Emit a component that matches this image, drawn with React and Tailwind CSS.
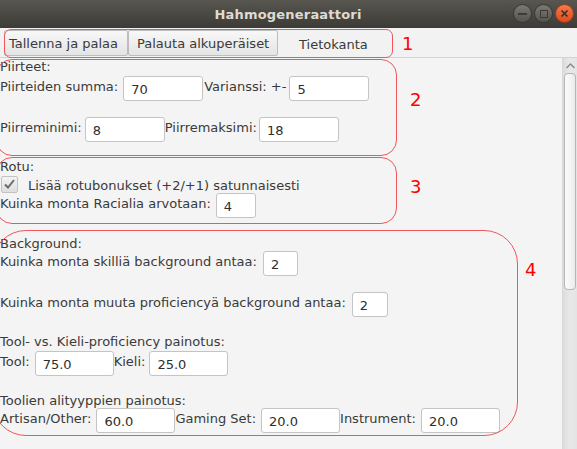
import React from "react";

function Field({ value, w }) {
  return (
    <div
      className={`${w} h-[25px] shrink-0 bg-white border border-[#c4c4c4] rounded-[3px] flex items-center pl-[7px] pt-[2px] text-[#2e2e2e]`}
    >
      {value}
    </div>
  );
}

function Label({ children, className = "" }) {
  return <span className={`pt-[3px] whitespace-nowrap ${className}`}>{children}</span>;
}

function TitleBar() {
  return (
    <div className="h-[28px] bg-gradient-to-b from-[#58564f] to-[#3c3b37] flex items-center justify-center relative">
      <span className="text-[#dfdbd2] font-bold text-[13px] tracking-[0.2px] mr-[1px]">
        Hahmogeneraattori
      </span>
      <div className="absolute right-[3px] top-[4px] flex gap-[2px]">
        <div className="w-[19px] h-[19px] rounded-full bg-gradient-to-b from-[#7a7974] to-[#55544f] border border-[#3a3935] flex items-center justify-center">
          <div className="w-[9px] h-[2px] bg-[#3c3b37]" />
        </div>
        <div className="w-[19px] h-[19px] rounded-full bg-gradient-to-b from-[#7a7974] to-[#55544f] border border-[#3a3935] flex items-center justify-center">
          <div className="w-[8px] h-[8px] border-[1.5px] border-[#3c3b37]" />
        </div>
        <div className="w-[19px] h-[19px] rounded-full bg-gradient-to-b from-[#f27a4c] to-[#dc4a1c] border border-[#a83a15] flex items-center justify-center">
          <svg width="9" height="9" viewBox="0 0 9 9">
            <path d="M1.5 1.5 L7.5 7.5 M7.5 1.5 L1.5 7.5" stroke="#3c2a20" strokeWidth="1.6" />
          </svg>
        </div>
      </div>
    </div>
  );
}

function Toolbar() {
  const btn =
    "h-[26px] flex items-center border border-[#bdbdbd] rounded-[2px] bg-gradient-to-b from-[#f8f8f8] to-[#e4e4e4]";
  return (
    <div className="h-[30px] flex items-center pl-[4px] pt-[1px] border-b border-[#d3d3d3]">
      <div className={`${btn} w-[124px] pl-[4px]`}>Tallenna ja palaa</div>
      <div className={`${btn} w-[150px] pl-[8px]`}>Palauta alkuperäiset</div>
      <div className="h-[26px] w-[88px] flex items-center pl-[21px] pt-[2px]">Tietokanta</div>
    </div>
  );
}

function Scrollbar() {
  return (
    <div className="w-[15px] shrink-0 bg-gradient-to-r from-[#dcdcdc] via-[#e8e8e8] to-[#e4e4e4] flex flex-col items-center border-l border-[#d8d8d8]">
      <svg width="11" height="14" viewBox="0 0 11 14" className="mt-[1px]">
        <path d="M1.5 9 L5.5 5 L9.5 9" stroke="#8a8a8a" strokeWidth="1.4" fill="none" />
      </svg>
      <div className="w-[12px] h-[217px] rounded-[4px] border border-[#b5b5b5] bg-gradient-to-r from-[#fbfbfb] to-[#ececec]" />
    </div>
  );
}

export default function App() {
  return (
    <div
      className="w-[577px] h-[449px] overflow-hidden bg-[#f2f2f2] text-[13px] leading-[15px] text-[#3a3a3a] relative"
      style={{ fontFamily: '"DejaVu Sans", "Liberation Sans", sans-serif' }}
    >
      <TitleBar />
      <Toolbar />
      <div className="flex h-[391px]">
        <div className="flex-1 flex flex-col bg-[#f4f4f4]">
          {/* Piirteet */}
          <div className="mt-[1px]">Piirteet:</div>
          <div className="flex items-start mt-[2px]">
            <Label className="mr-[5px]">Piirteiden summa:</Label>
            <Field value="70" w="w-[80px]" />
            <Label className="ml-[1px] mr-[3px]">Varianssi: +-</Label>
            <Field value="5" w="w-[80px]" />
          </div>
          <div className="flex items-start mt-[16px]">
            <Label className="mr-[3px]">Piirreminimi:</Label>
            <Field value="8" w="w-[80px]" />
            <Label className="mr-[2px]">Piirremaksimi:</Label>
            <Field value="18" w="w-[80px]" />
          </div>

          {/* Rotu */}
          <div className="mt-[17px]">Rotu:</div>
          <div className="flex items-center h-[18px] mt-[1px]">
            <div className="ml-[1px] w-[17px] h-[17px] rounded-[2px] border border-[#c2c2c2] bg-gradient-to-b from-[#f4f4f4] to-[#dedede] flex items-center justify-center">
              <svg width="13" height="12" viewBox="0 0 13 12">
                <path d="M2 6.5 L5 9.5 L11 2" stroke="#6a6a6a" strokeWidth="2" fill="none" />
              </svg>
            </div>
            <span className="ml-[10px] pt-[2px]">Lisää rotubonukset (+2/+1) satunnaisesti</span>
          </div>
          <div className="flex items-start">
            <Label className="mr-[5px]">Kuinka monta Racialia arvotaan:</Label>
            <Field value="4" w="w-[40px]" />
          </div>

          {/* Background */}
          <div className="mt-[18px]">Background:</div>
          <div className="flex items-start">
            <Label className="mr-[6px]">Kuinka monta skilliä background antaa:</Label>
            <Field value="2" w="w-[35px]" />
          </div>
          <div className="flex items-start mt-[16px]">
            <Label className="mr-[6px]">Kuinka monta muuta proficiencyä background antaa:</Label>
            <Field value="2" w="w-[36px]" />
          </div>
          <div className="mt-[17px]">Tool- vs. Kieli-proficiency painotus:</div>
          <div className="flex items-start mt-[2px]">
            <Label className="mr-[5px]">Tool:</Label>
            <Field value="75.0" w="w-[79px]" />
            <Label className="mr-[4px]">Kieli:</Label>
            <Field value="25.0" w="w-[79px]" />
          </div>
          <div className="mt-[17px]">Toolien alityyppien painotus:</div>
          <div className="flex items-start">
            <Label className="mr-[5px]">Artisan/Other:</Label>
            <Field value="60.0" w="w-[79px]" />
            <Label className="mr-[5px]">Gaming Set:</Label>
            <Field value="20.0" w="w-[79px]" />
            <Label className="mr-[5px]">Instrument:</Label>
            <Field value="20.0" w="w-[79px]" />
          </div>
        </div>
        <Scrollbar />
      </div>

      {/* red annotations */}
      <div className="absolute left-[4px] top-[29px] w-[389px] h-[29px] border border-[#f0565a] rounded-[7px]" />
      <div className="absolute left-[402px] top-[34px] text-[#f00] text-[18px] leading-[20px]">1</div>
      <div className="absolute left-[-4px] top-[59px] w-[401px] h-[97px] border border-[#f0565a] rounded-[16px]" />
      <div className="absolute left-[410px] top-[90px] text-[#f00] text-[18px] leading-[20px]">2</div>
      <div className="absolute left-[-4px] top-[157px] w-[401px] h-[67px] border border-[#f0565a] rounded-[16px]" />
      <div className="absolute left-[410px] top-[177px] text-[#f00] text-[18px] leading-[20px]">3</div>
      <div className="absolute left-[-8px] top-[230px] w-[526px] h-[206px] border border-[#f0565a] rounded-[34px]" />
      <div className="absolute left-[525px] top-[260px] text-[#f00] text-[18px] leading-[20px]">4</div>
    </div>
  );
}
